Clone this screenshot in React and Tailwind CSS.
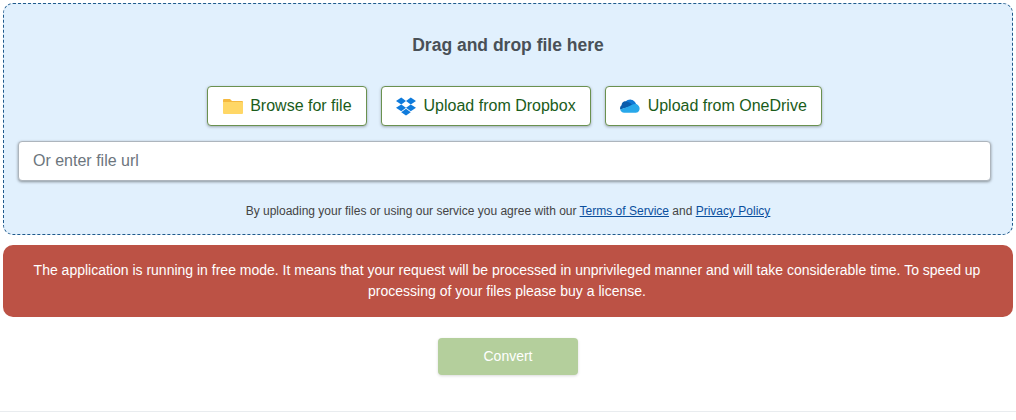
function FolderIcon() {
  return (
    <svg width="20" height="16" viewBox="0 0 20 16" className="ml-px -mr-px">
      <path d="M0 2a1 1 0 0 1 1-1h6l2 2h10a1 1 0 0 1 1 1v3H0z" fill="#f5b93f" />
      <path d="M0 4h19a1 1 0 0 1 1 1v10a1 1 0 0 1-1 1H1a1 1 0 0 1-1-1z" fill="#ffd766" />
    </svg>
  );
}

function DropboxIcon() {
  return (
    <svg width="20" height="19" viewBox="0 0 21 20" fill="#0f7bdc">
      <path d="M5.5 0.5 0 4.2l5.5 3.6 5-3.6z" />
      <path d="M15.5 0.5 10.5 4.2l5 3.6L21 4.2z" />
      <path d="M0 11.3l5.5 3.7 5-3.7-5-3.500z" />
      <path d="M15.5 7.8l-5 3.5 5 3.7 5.5-3.700z" />
      <path d="M10.5 12.3 5.5 16l5 3.5 5-3.500z" />
    </svg>
  );
}

function OneDriveIcon() {
  return (
    <svg width="20" height="14" viewBox="0 0 22 15">
      <path d="M6 3C7.500 1.200 9.800 .3 12 .5c2.500.2 4.500 1.800 5.400 4.300L20 9 8 10z" fill="#0f78d4" />
      <path d="M8.500 3C6.500 1.800 3.800 2.200 2.700 4 2 5 1.700 5.800 1.800 6.700 .4 7.500-.3 9.500.2 11.300L9 9l4-3C12 4.500 10.300 3.300 8.500 3z" fill="#0a5cab" />
      <path d="M17.400 5.300c-1.700-.2-3 .2-3.900.7L8 8.500.2 11.300C.7 13.300 2.300 15 4.500 15h13c1.500 0 2.800-.9 3.500-2.200.9-1.700.7-3.600-.2-5-.7-1.300-2-2.300-3.400-2.500z" fill="#28a8ea" />
    </svg>
  );
}

function SourceButton({ icon, label }) {
  return (
    <button className="h-10 flex items-center gap-2 px-[14px] bg-white border border-[#6a9150] rounded text-[16px] text-[#1a5c1a] shadow-[0_1px_3px_rgba(0,0,0,0.3)]">
      {icon}
      <span>{label}</span>
    </button>
  );
}

export default function App() {
  return (
    <div className="w-[1016px] h-[420px] bg-white overflow-hidden pt-[3px] px-[3px] font-['Liberation_Sans',Arial,sans-serif]">
      <div className="w-[1010px] h-[232px] bg-[#e1f0fd] border border-dashed border-[#1f5a8c] rounded-[10px] px-[14px] pt-[29px] flex flex-col items-center">
        <h2 className="text-[17.5px] leading-[24px] font-bold text-[#495057]">Drag and drop file here</h2>
        <div className="flex gap-[14px] mt-[29px] ml-[13px]">
          <SourceButton icon={<FolderIcon />} label="Browse for file" />
          <SourceButton icon={<DropboxIcon />} label="Upload from Dropbox" />
          <SourceButton icon={<OneDriveIcon />} label="Upload from OneDrive" />
        </div>
        <input
          placeholder="Or enter file url"
          className="self-start w-[973px] h-10 mt-[15px] px-[14px] bg-white border border-[#adb5bd] rounded text-[16px] shadow-[0_1px_3px_rgba(0,0,0,0.4)] placeholder:text-[#6c757d] outline-none"
        />
        <p className="mt-[21px] text-[12px] leading-[18px] text-[#444]">
          By uploading your files or using our service you agree with our{" "}
          <a className="text-[#0b4f9e] underline">Terms of Service</a> and{" "}
          <a className="text-[#0b4f9e] underline">Privacy Policy</a>
        </p>
      </div>
      <div className="w-[1010px] h-[72px] mt-[10px] bg-[#bc5245] rounded-[10px] pl-[19px] pr-[21px] text-center text-white text-[14px] leading-[21px] flex items-center">
        <p>
          The application is running in free mode. It means that your request will be processed in unprivileged manner and will take considerable time. To speed up processing of your files please buy a license.
        </p>
      </div>
      <div className="flex justify-center mt-[21px]">
        <button className="w-[140px] h-[37px] bg-[#b4cf9c] rounded text-white text-[14px] shadow-[0_1px_3px_rgba(0,0,0,0.15)]">
          Convert
        </button>
      </div>
      <div className="-mx-[3px] mt-[36px] border-t border-[#e9ecef]" />
    </div>
  );
}
